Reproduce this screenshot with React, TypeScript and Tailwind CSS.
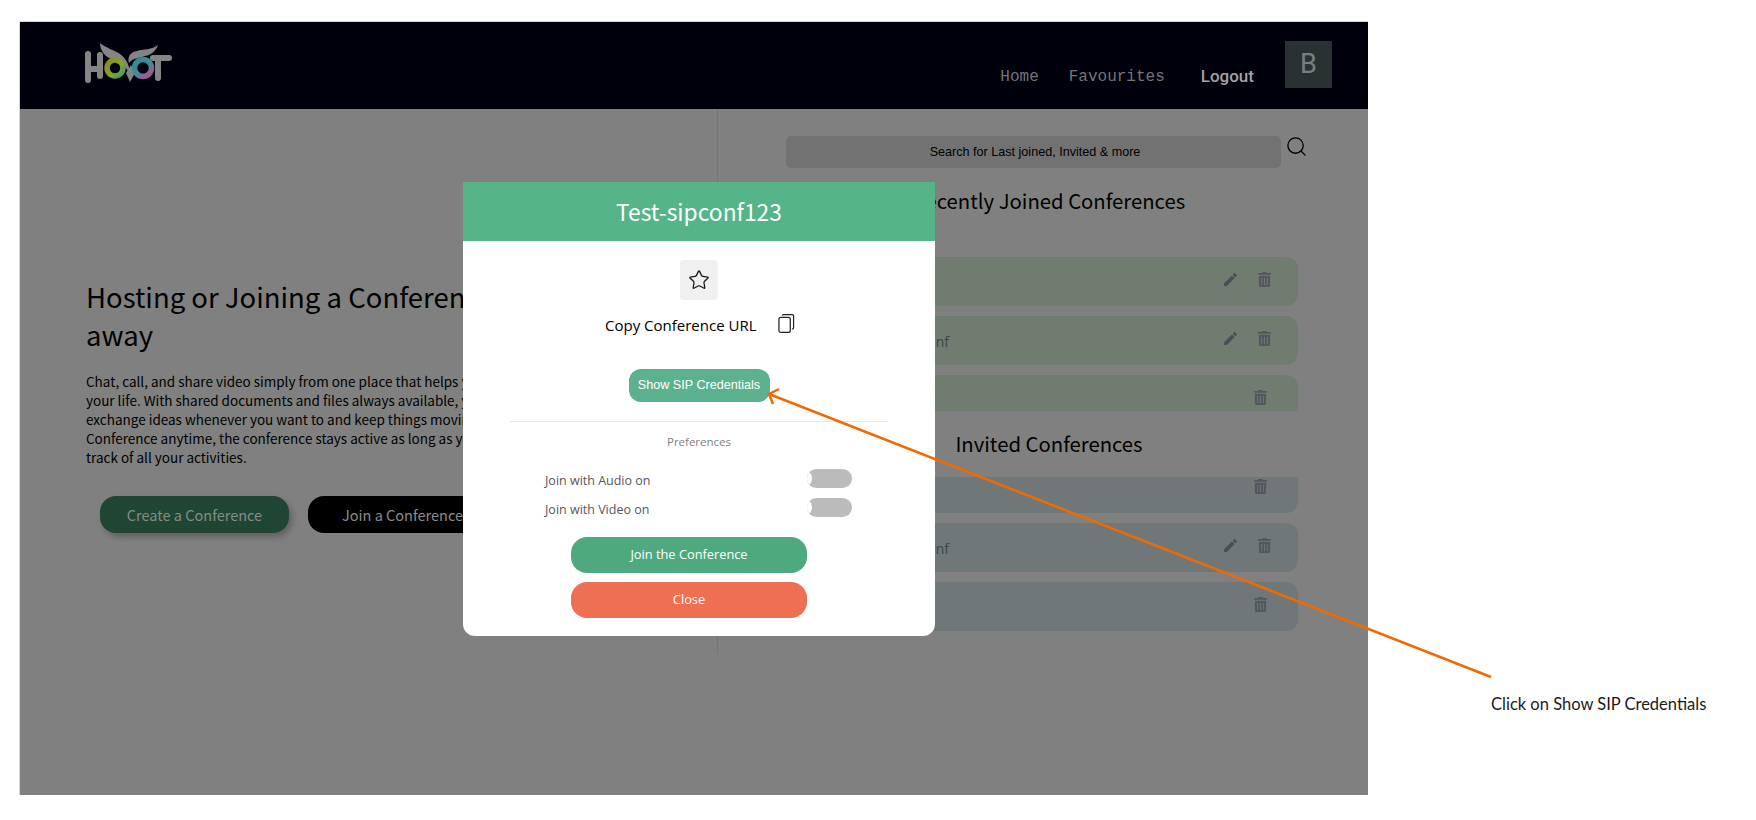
import { Search, Star } from "lucide-react";
import { FaTrashAlt } from "react-icons/fa";
import { MdEdit } from "react-icons/md";

const sans = "font-['Open_Sans','Noto_Sans',sans-serif]";
const cjk = "font-['Noto_Sans_CJK_SC','Noto_Sans',sans-serif]";

function Logo() {
  return (
    <svg width="88" height="42" viewBox="0 0 88 42" fill="none" className="block">
      <defs>
        <linearGradient id="eyeL" x1="0" y1="0" x2="1" y2="1">
          <stop offset="0" stopColor="#8d8a1e" />
          <stop offset="0.6" stopColor="#7fa52f" />
          <stop offset="1" stopColor="#3f9f68" />
        </linearGradient>
        <linearGradient id="eyeR" x1="0" y1="0" x2="0.7" y2="1">
          <stop offset="0" stopColor="#2f8a94" />
          <stop offset="0.55" stopColor="#3a8f9a" />
          <stop offset="1" stopColor="#a0568f" />
        </linearGradient>
      </defs>
      <g fill="#848484">
        <rect x="0" y="8" width="6" height="32" rx="3" />
        <rect x="12" y="9" width="6" height="27" rx="3" />
        <rect x="3" y="23" width="12" height="6" />
        <rect x="65" y="12" width="22" height="6" rx="3" />
        <rect x="70" y="12" width="6" height="26" rx="3" />
        <path d="M15 0 C21 5 29 7 35 11 C42 16 45 24 45 31 C41 23 33 18 24 15 C19 12 15 7 15 0 Z" />
        <path d="M73 2 C67 7 58 6 52 8 C46 9 42 13 44 20 C48 15 54 15 60 13 C66 12 71 8 73 2 Z" />
        <path d="M41 30 L46 22 L50 30 L45 39 Z" />
      </g>
      <circle cx="30" cy="25" r="8" stroke="url(#eyeL)" strokeWidth="5.5" />
      <circle cx="58" cy="25" r="8.5" stroke="url(#eyeR)" strokeWidth="5.5" />
    </svg>
  );
}

function CopyIcon() {
  return (
    <svg width="17" height="21" viewBox="0 0 18 21" fill="none" stroke="#222" strokeWidth="1.3">
      <rect x="1" y="4" width="12" height="16" rx="2" />
      <path d="M4.5 2.2 Q4.6 1 6 1 H15 Q16.5 1 16.5 2.5 V15 Q16.5 16.4 15 16.5" />
    </svg>
  );
}

function ConfRow({ name, tint, edit = true }: { name: string; tint: string; edit?: boolean }) {
  return (
    <div className={`flex h-[49px] shrink-0 items-center rounded-xl ${tint}`}>
      <span className={`ml-[84px] mt-[2px] text-sm text-[#37474a] ${sans}`}>{name}</span>
      <div className="ml-auto flex w-[84px] items-center pb-[5px]">
        {edit ? <MdEdit size={17} className="ml-[8px] text-[#454f59]" /> : <span className="w-[24px]" />}
        <FaTrashAlt size={15} className={`text-[#54575f] ${edit ? "ml-[18px]" : "ml-[15px]"}`} />
      </div>
    </div>
  );
}

function PrefRow({ label }: { label: string }) {
  return (
    <div className="flex h-[29px] items-start">
      <span className="mt-[3px] text-[12.5px] text-[#5a5555]">{label}</span>
      <span className="ml-auto h-[19px] w-[45px] overflow-hidden rounded-full bg-[#bbbbbb]">
        <span className="-ml-[14px] block h-[19px] w-[19px] rounded-full bg-white" />
      </span>
    </div>
  );
}

export default function App() {
  return (
    <div className="relative flex h-[820px] w-[1756px] overflow-hidden bg-white">
      <div className="relative ml-[19px] mt-[21px] h-[774px] w-[1349px] shrink-0 border-l border-t border-[#d4d4d4] bg-[#808080]">
        <nav className="flex h-[87px] items-start bg-[#00000d] pl-[65px]">
          <div className="mt-[21px]">
            <Logo />
          </div>
          <div className="ml-auto mt-[42px] flex items-center font-['Liberation_Mono',monospace] text-base text-[#757575]">
            <span>Home</span>
            <span className="ml-[30px]">Favourites</span>
            <span className="ml-[36px] font-['Roboto',sans-serif] text-[17px] font-medium text-[#a3a3a3]">Logout</span>
          </div>
          <div className="ml-[31px] mr-[36px] mt-[19px] flex h-[47px] w-[47px] items-center justify-center bg-[#2a3133] font-['Roboto',sans-serif] text-[27px] text-[#797f81]">
            B
          </div>
        </nav>

        <div className="flex h-[545px]">
          <section className={`w-[698px] border-r border-[#757575] pl-[66px] pt-[168px] text-black ${cjk}`}>
            <h1 className="whitespace-nowrap text-[27.5px] leading-[38px]">
              Hosting or Joining a Conference is just a click
              <br />
              away
            </h1>
            <p className="mt-[19px] whitespace-nowrap text-[13.5px] leading-[19px]">
              Chat, call, and share video simply from one place that helps you connect in
              <br />
              your life. With shared documents and files always available, you can
              <br />
              exchange ideas whenever you want to and keep things moving. Start a
              <br />
              Conference anytime, the conference stays active as long as you need it, keeping
              <br />
              track of all your activities.
            </p>
            <div className="ml-[14px] mt-[29px] flex gap-[19px]">
              <button className="h-[37px] w-[189px] rounded-2xl bg-[#1e4633] text-[14.5px] text-[#858d88] shadow-[3px_4px_6px_rgba(0,0,0,0.25)]">
                Create a Conference
              </button>
              <button className="h-[37px] w-[189px] rounded-2xl bg-black text-[14.5px] text-[#8c8c8c]">
                Join a Conference
              </button>
            </div>
          </section>

          <section className={`flex-1 pl-[68px] pt-[27px] text-black ${cjk}`}>
            <div className="flex items-start">
              <div className="flex h-[32px] w-[495px] items-center justify-center rounded-[5px] bg-[#727272] pl-[3px] font-['Liberation_Sans',sans-serif] text-[12.6px]">
                Search for Last joined, Invited &amp; more
              </div>
              <Search size={23} strokeWidth={1.4} className="ml-[4px] mt-[-1px]" />
            </div>
            <div className="w-[512px]">
              <h2 className="mt-[17px] h-[72px] pl-[14px] text-center text-[20.3px] leading-[30px]">
                Recently Joined Conferences
              </h2>
              <div className="flex h-[154px] flex-col gap-[10px] overflow-hidden">
                <ConfRow name="Demo" tint="bg-[#717c71]" />
                <ConfRow name="Test-sipconf" tint="bg-[#717c71]" />
                <ConfRow name="Demo" tint="bg-[#717c71]" edit={false} />
              </div>
              <h2 className="mt-[17px] h-[49px] pl-[14px] text-center text-[20.3px] leading-[30px]">
                Invited Conferences
              </h2>
              <div className="flex h-[154px] flex-col justify-end gap-[10px] overflow-hidden">
                <ConfRow name="Demo" tint="bg-[#6f7779]" edit={false} />
                <ConfRow name="Test-sipconf" tint="bg-[#6f7779]" />
                <ConfRow name="Demo" tint="bg-[#6f7779]" edit={false} />
              </div>
            </div>
          </section>
        </div>

        <div className={`absolute left-[443px] top-[160px] h-[454px] w-[472px] overflow-hidden rounded-b-xl bg-white ${sans}`}>
          <div className="flex h-[59px] items-center justify-center bg-[#55b589] pt-[1px] font-['Noto_Sans_CJK_SC',sans-serif] text-[22.8px] text-white">
            Test-sipconf123
          </div>
          <div className="mx-auto mt-[19px] flex h-[40px] w-[38px] items-center justify-center rounded-sm bg-[#f0f0f0]">
            <Star size={22} strokeWidth={1.4} className="text-[#1a1a1a]" />
          </div>
          <div className="mt-[14px] flex h-[22px] items-center pl-[142px] text-[15px] text-black">
            <span>Copy Conference URL</span>
            <span className="ml-[22px] mt-[-4px]">
              <CopyIcon />
            </span>
          </div>
          <button className="mx-auto mt-[33px] block h-[33px] w-[141px] rounded-xl bg-[#5cb28e] font-['Liberation_Sans',sans-serif] text-[12.6px] text-white">
            Show SIP Credentials
          </button>
          <div className="mx-[47px] mt-[19px] border-t border-[#e8e8e8]" />
          <p className="mt-[10px] text-center text-[11.5px] leading-[20px] text-[#808080]">Preferences</p>
          <div className="ml-[82px] mr-[83px] mt-[17px]">
            <PrefRow label="Join with Audio on" />
            <PrefRow label="Join with Video on" />
          </div>
          <div className="ml-[108px] mt-[10px] flex w-[236px] flex-col gap-[9px] text-[12.8px] text-white">
            <button className="h-[36px] rounded-2xl bg-[#4fa97e]">Join the Conference</button>
            <button className="h-[36px] rounded-2xl bg-[#ef6f54]">Close</button>
          </div>
        </div>
      </div>

      <p className="ml-[123px] mt-[694px] font-['Lato',sans-serif] text-[16.5px] leading-[20px] text-[#1a1a1a]">
        Click on Show SIP Credentials
      </p>

      <svg className="pointer-events-none absolute inset-0" width="1756" height="820" fill="none" stroke="#f06a00" strokeWidth="2.5">
        <path d="M1491 677 L769 394" />
        <path d="M779 389 L769 394 L773 404" />
      </svg>
    </div>
  );
}
